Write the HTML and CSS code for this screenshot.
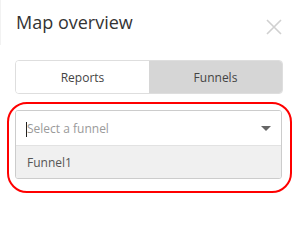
FILE: index.html
```html
<!DOCTYPE html>
<html lang="en">
<head>
    <meta charset="UTF-8">
    <title>Map overview</title>
    <link rel="stylesheet" href="styles.css">
</head>
<body>
    <div class="panel">
        <div class="panel-header">
            <h1 class="panel-title">Map overview</h1>
            <span class="close-btn" aria-label="Close">
                <svg width="16" height="16" viewBox="0 0 16 16">
                    <path d="M1 1 L15 15 M15 1 L1 15" stroke="#d0d0d0" stroke-width="1.6" fill="none"/>
                </svg>
            </span>
        </div>

        <div class="tabs">
            <div class="tab">Reports</div>
            <div class="tab active">Funnels</div>
        </div>

        <div class="highlight">
            <div class="select">
                <div class="select-input">
                    <span class="caret"></span>
                    <span class="placeholder">Select a funnel</span>
                    <span class="arrow"></span>
                </div>
                <div class="select-option">Funnel1</div>
            </div>
        </div>
    </div>
</body>
</html>
```

FILE: styles.css
```css
body {
    margin: 0;
    background: #ffffff;
    font-family: 'Open Sans', 'Liberation Sans', sans-serif;
    color: #333333;
}
.panel {
    width: 298px;
}
.panel-header {
    display: flex;
    justify-content: space-between;
    align-items: flex-start;
    height: 45px;
    padding: 10px 16px 0 15px;
    box-sizing: border-box;
    border-left: 1px solid #f2f2f2;
}
.panel-title {
    margin: 0;
    font-size: 18px;
    font-weight: 400;
    line-height: 24px;
    color: #333333;
}
.close-btn {
    display: block;
    width: 16px;
    height: 16px;
    margin-top: 9px;
}
.close-btn svg {
    display: block;
}
.tabs {
    display: flex;
    margin: 15px 15px 0 15px;
    height: 34px;
    border: 1px solid #dedede;
    border-radius: 4px;
    overflow: hidden;
    box-sizing: border-box;
}
.tab {
    flex: 1;
    display: flex;
    align-items: center;
    justify-content: center;
    font-size: 12px;
    color: #444444;
    background: #ffffff;
}
.tab.active {
    background: #d6d6d6;
}
.highlight {
    margin: 8px 6px 0 7px;
    padding: 6px 8px 12px 6px;
    border: 2px solid #ff0000;
    border-radius: 20px;
}
.select {
    border: 1px solid #cccccc;
    border-radius: 3px;
    overflow: hidden;
}
.select-input {
    display: flex;
    align-items: center;
    height: 34px;
    padding: 0 10px;
    background: #ffffff;
    border-bottom: 1px solid #e2e2e2;
}
.caret {
    width: 1px;
    height: 15px;
    background: #222222;
    margin-top: 2px;
}
.placeholder {
    flex: 1;
    font-size: 12px;
    color: #9a9a9a;
}
.arrow {
    width: 0;
    height: 0;
    border-left: 5px solid transparent;
    border-right: 5px solid transparent;
    border-top: 5px solid #666666;
}
.select-option {
    height: 32px;
    display: flex;
    align-items: center;
    padding: 0 11px;
    background: #f0f0f0;
    font-size: 12px;
    color: #555555;
}
```
